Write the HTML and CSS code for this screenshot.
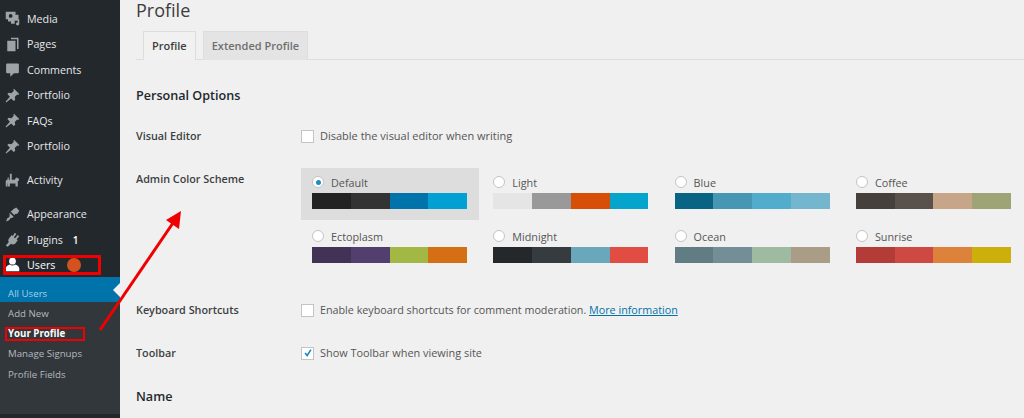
FILE: index.html
```html
<!DOCTYPE html>
<html lang="en">
<head>
<meta charset="utf-8">
<title>Profile</title>
<link rel="stylesheet" href="styles.css">
</head>
<body>
<div class="page">
  <aside class="sidebar">
    <ul class="menu">
      <li class="item"><svg class="icon" viewBox="0 0 20 20"><path d="M1 1h13v4h4v7h-5v5H8v-3H4v-3H1z"/><circle cx="7.500" cy="6.500" r="2.500" fill="#23282d"/><path d="M13 11h6v6a2.200 2.200 0 1 1-2-2v-2h-4z"/></svg><span>Media</span></li>
      <li class="item"><svg class="icon" viewBox="0 0 20 20"><path d="M8 1h10v15h-2V3H8z"/><path d="M3 5h11v14H3z"/></svg><span>Pages</span></li>
      <li class="item"><svg class="icon" viewBox="0 0 20 20"><path d="M3 2h14a1.500 1.500 0 0 1 1.500 1.500v10A1.500 1.500 0 0 1 17 15h-5l-5 4.500V15H3a1.500 1.500 0 0 1-1.500-1.500v-10A1.500 1.500 0 0 1 3 2z"/></svg><span>Comments</span></li>
      <li class="item"><svg class="icon" viewBox="0 0 20 20"><path d="M12 1l7 7-1.500 1.200-1.200-.6-3.300 3.300.6 3.600-1.800 1.800-3.600-3.400L2 19l-1 0 0-1 5.500-6.300-3.400-3.600L4.900 6.300l3.600.6 3.300-3.300-.6-1.200z"/></svg><span>Portfolio</span></li>
      <li class="item"><svg class="icon" viewBox="0 0 20 20"><path d="M12 1l7 7-1.500 1.200-1.200-.6-3.300 3.300.6 3.600-1.800 1.800-3.600-3.400L2 19l-1 0 0-1 5.500-6.300-3.400-3.600L4.900 6.300l3.600.6 3.300-3.300-.6-1.200z"/></svg><span>FAQs</span></li>
      <li class="item"><svg class="icon" viewBox="0 0 20 20"><path d="M12 1l7 7-1.500 1.200-1.200-.6-3.300 3.300.6 3.600-1.800 1.800-3.600-3.400L2 19l-1 0 0-1 5.500-6.300-3.400-3.600L4.900 6.300l3.600.6 3.300-3.300-.6-1.200z"/></svg><span>Portfolio</span></li>
      <li class="item group"><svg class="icon" viewBox="0 0 20 20"><path d="M2 9h1.500V6H5v3h1.500V1h2.500v8h4l1-2h1V5.500L17 7h1l1 2.500-2 1.500v7h-3v-4H6.500v4h-3v-4H3v4H1v-7z"/></svg><span>Activity</span></li>
      <li class="item group"><svg class="icon" viewBox="0 0 20 20"><path d="M11 3l4-2.500 4 4.500-2.500 4-3 .2-1 1.800-5-5 2-1.500zM6 7.500l5.500 5.500-2 1.500-2 .3-2 3-4 1.500 1.300-4 3-2 .4-2z"/></svg><span>Appearance</span></li>
      <li class="item"><svg class="icon" viewBox="0 0 20 20"><path d="M13 1l2.200 1.700-3.400 4.300 1.700 1.300 3.500-4.300 2 1.500-3.500 4.300 1.500 1.200-3.500 4.500c-2 1.500-4.300 1.200-5.500 0L3.500 19.500 1 18l4-4.500c-1-1.700-.8-3.700.5-5.200L9 4l1.500 1.300z"/></svg><span>Plugins</span><b class="count">1</b></li>
      <li class="item current"><svg class="icon" viewBox="0 0 20 20"><circle cx="10" cy="5.500" r="4.500"/><path d="M1 19v-4c0-2.500 3.500-4.500 5.500-5 2 1.800 5 1.800 7 0 2 .5 5.500 2.500 5.500 5v4z"/></svg><span>Users</span></li>
    </ul>
    <ul class="submenu">
      <li class="sub active">All Users</li>
      <li class="sub">Add New</li>
      <li class="sub strong">Your Profile</li>
      <li class="sub">Manage Signups</li>
      <li class="sub">Profile Fields</li>
    </ul>
  </aside>

  <main class="content">
    <h1 class="title">Profile</h1>
    <nav class="tabs">
      <span class="tab on">Profile</span>
      <span class="tab">Extended Profile</span>
    </nav>

    <h2 class="heading first">Personal Options</h2>

    <div class="row editor">
      <div class="label">Visual Editor</div>
      <label class="check"><i class="box"></i>Disable the visual editor when writing</label>
    </div>

    <div class="row schemes">
      <div class="label">Admin Color Scheme</div>
      <div class="grid">
        <div class="scheme selected"><div class="name"><i class="radio on"></i>Default</div><div class="bar"><i class="c1"></i><i class="c2"></i><i class="c3"></i><i class="c4"></i></div></div>
        <div class="scheme"><div class="name"><i class="radio"></i>Light</div><div class="bar"><i class="l1"></i><i class="l2"></i><i class="l3"></i><i class="l4"></i></div></div>
        <div class="scheme"><div class="name"><i class="radio"></i>Blue</div><div class="bar"><i class="b1"></i><i class="b2"></i><i class="b3"></i><i class="b4"></i></div></div>
        <div class="scheme"><div class="name"><i class="radio"></i>Coffee</div><div class="bar"><i class="f1"></i><i class="f2"></i><i class="f3"></i><i class="f4"></i></div></div>
        <div class="scheme"><div class="name"><i class="radio"></i>Ectoplasm</div><div class="bar"><i class="e1"></i><i class="e2"></i><i class="e3"></i><i class="e4"></i></div></div>
        <div class="scheme"><div class="name"><i class="radio"></i>Midnight</div><div class="bar"><i class="m1"></i><i class="m2"></i><i class="m3"></i><i class="m4"></i></div></div>
        <div class="scheme"><div class="name"><i class="radio"></i>Ocean</div><div class="bar"><i class="o1"></i><i class="o2"></i><i class="o3"></i><i class="o4"></i></div></div>
        <div class="scheme"><div class="name"><i class="radio"></i>Sunrise</div><div class="bar"><i class="s1"></i><i class="s2"></i><i class="s3"></i><i class="s4"></i></div></div>
      </div>
    </div>

    <div class="row keys">
      <div class="label">Keyboard Shortcuts</div>
      <label class="check"><i class="box"></i>Enable keyboard shortcuts for comment moderation.&nbsp;<a class="link">More information</a></label>
    </div>

    <div class="row toolbar">
      <div class="label">Toolbar</div>
      <label class="check"><i class="box"><svg class="tick" viewBox="0 0 12 12"><path d="M2.500 6l2.500 3 4.500-7" /></svg></i>Show Toolbar when viewing site</label>
    </div>

    <h2 class="heading name-head">Name</h2>
  </main>

  <i class="mark mark-users"></i>
  <i class="mark mark-profile"></i>
  <i class="dot"></i>
  <svg class="arrow" viewBox="0 0 1024 418"><line x1="100" y1="330" x2="173" y2="223"/><polygon points="181,211 179,229 166,220"/></svg>
</div>
</body>
</html>
```
FILE: styles.css
```css
* { box-sizing: border-box; }
html, body { margin: 0; padding: 0; }
body { font-family: "Open Sans", "Liberation Sans", sans-serif; background: #f1f1f1; color: #444; }
.page { position: relative; display: flex; width: 1024px; height: 418px; overflow: hidden; background: #f0f0f0; }

.sidebar { flex: 0 0 119.5px; background: #23282d; padding-top: 5.800px; }
.menu, .submenu { list-style: none; margin: 0; padding: 0; }
.item { display: flex; align-items: center; height: 25.5px; padding-left: 5px; color: #e6e7e8; font-size: 10.700px; }
.item span { margin-left: 7px; }
.item.group { margin-top: 8.500px; }
.item.current { color: #fff; height: 25px; }
.item.current .icon { fill: #fff; }
.icon { flex: 0 0 15px; width: 15px; height: 15px; fill: #9ea3a8; }
.count { margin-left: 10px; font-size: 10px; font-weight: 600; color: #fff; }

.submenu { height: 137px; background: #32373c; }
.sub { height: 20.300px; line-height: 20px; padding: 1.400px 0 0 8px; font-size: 9.700px; color: #b4b9be; }
.sub.active { position: relative; height: 25px; padding-top: 7px; color: #a5cfe8; background: #0073aa; }
.sub.active::after { content: ""; position: absolute; right: 0; top: 6px; border: 7px solid transparent; border-right-color: #f1f1f1; border-left-width: 0; }
.sub.strong { color: #fff; font-weight: 700; }

.content { flex: 1; min-width: 0; padding-left: 16.500px; }
.title { margin: 2px 0 0; font-size: 18px; font-weight: 400; line-height: 16px; color: #3c3c3c; }
.tabs { display: flex; gap: 7px; margin-top: 13px; padding-left: 7px; height: 29px; border-bottom: 1px solid #ddd; }
.tab { display: flex; align-items: center; height: 29px; padding: 0 8px 2px; font-size: 11px; font-weight: 600; color: #6f6f6f; background: #e4e4e4; border: 1px solid #ddd; border-bottom: 0; }
.tab.on { color: #3d3d3d; background: #f1f1f1; }

.heading { margin: 0; font-size: 12.600px; font-weight: 600; color: #23282d; line-height: 18px; }
.heading.first { margin-top: 27px; }
.heading.name-head { margin-top: 27px; }

.row { display: flex; }
.label { flex: 0 0 165px; font-size: 10.800px; font-weight: 600; color: #3c3f42; line-height: 16px; }
.check { display: flex; align-items: center; font-size: 10.900px; color: #555; line-height: 16px; }
.editor .check { font-size: 11px; }
.keys .check { font-size: 10.750px; }
.box { display: inline-flex; align-items: center; justify-content: center; width: 13px; height: 13px; margin-right: 6px; background: #fff; border: 1px solid #c4c4c4; }
.tick { width: 10px; height: 10px; fill: none; stroke: #1e8cbe; stroke-width: 2; }
.link { color: #0073aa; text-decoration: underline; }

.editor { margin-top: 23px; }
.schemes { margin-top: 24px; }
.keys { margin-top: 28px; }
.toolbar { margin-top: 27px; }

.schemes .label { margin-top: 3px; }
.grid { display: grid; grid-template-columns: repeat(4, 178px); column-gap: 3.300px; grid-auto-rows: 52px; row-gap: 2px; }
.scheme { padding: 6px 11px 0; }
.scheme.selected { background: #ddd; }
.name { display: flex; align-items: center; height: 16px; font-size: 10.800px; color: #555; }
.radio { position: relative; width: 12px; height: 12px; margin-right: 7px; background: #fff; border: 1px solid #c4c4c4; border-radius: 50%; }
.radio.on::after { content: ""; position: absolute; left: 2.500px; top: 2.500px; width: 5px; height: 5px; border-radius: 50%; background: #1e8cbe; }
.bar { display: flex; height: 16px; margin-top: 3px; width: 155px; }
.bar i { flex: 1; }

.c1 { background: #222; } .c2 { background: #333; } .c3 { background: #0073aa; } .c4 { background: #00a0d2; }
.l1 { background: #e5e5e5; } .l2 { background: #999; } .l3 { background: #d64e07; } .l4 { background: #04a4cc; }
.b1 { background: #096484; } .b2 { background: #4796b3; } .b3 { background: #52accc; } .b4 { background: #74b6ce; }
.f1 { background: #46403c; } .f2 { background: #59524c; } .f3 { background: #c7a589; } .f4 { background: #9ea476; }
.e1 { background: #413256; } .e2 { background: #523f6d; } .e3 { background: #a3b745; } .e4 { background: #d46f15; }
.m1 { background: #25282b; } .m2 { background: #363b3f; } .m3 { background: #69a8bb; } .m4 { background: #e14d43; }
.o1 { background: #627c83; } .o2 { background: #738e96; } .o3 { background: #9ebaa0; } .o4 { background: #aa9d88; }
.s1 { background: #b43c38; } .s2 { background: #cf4944; } .s3 { background: #dd823b; } .s4 { background: #ccaf0b; }

.mark { position: absolute; border: 3px solid #f00000; }
.mark-users { left: 3px; top: 255px; width: 98px; height: 20px; }
.mark-profile { left: 5px; top: 327px; width: 80px; height: 14px; border-width: 2.500px; }
.dot { position: absolute; left: 67px; top: 258px; width: 14px; height: 14px; border-radius: 50%; background: #d5521f; }
.arrow { position: absolute; left: 0; top: 0; width: 1024px; height: 418px; pointer-events: none; }
.arrow line { stroke: #f00000; stroke-width: 3; }
.arrow polygon { fill: #f00000; }
```
